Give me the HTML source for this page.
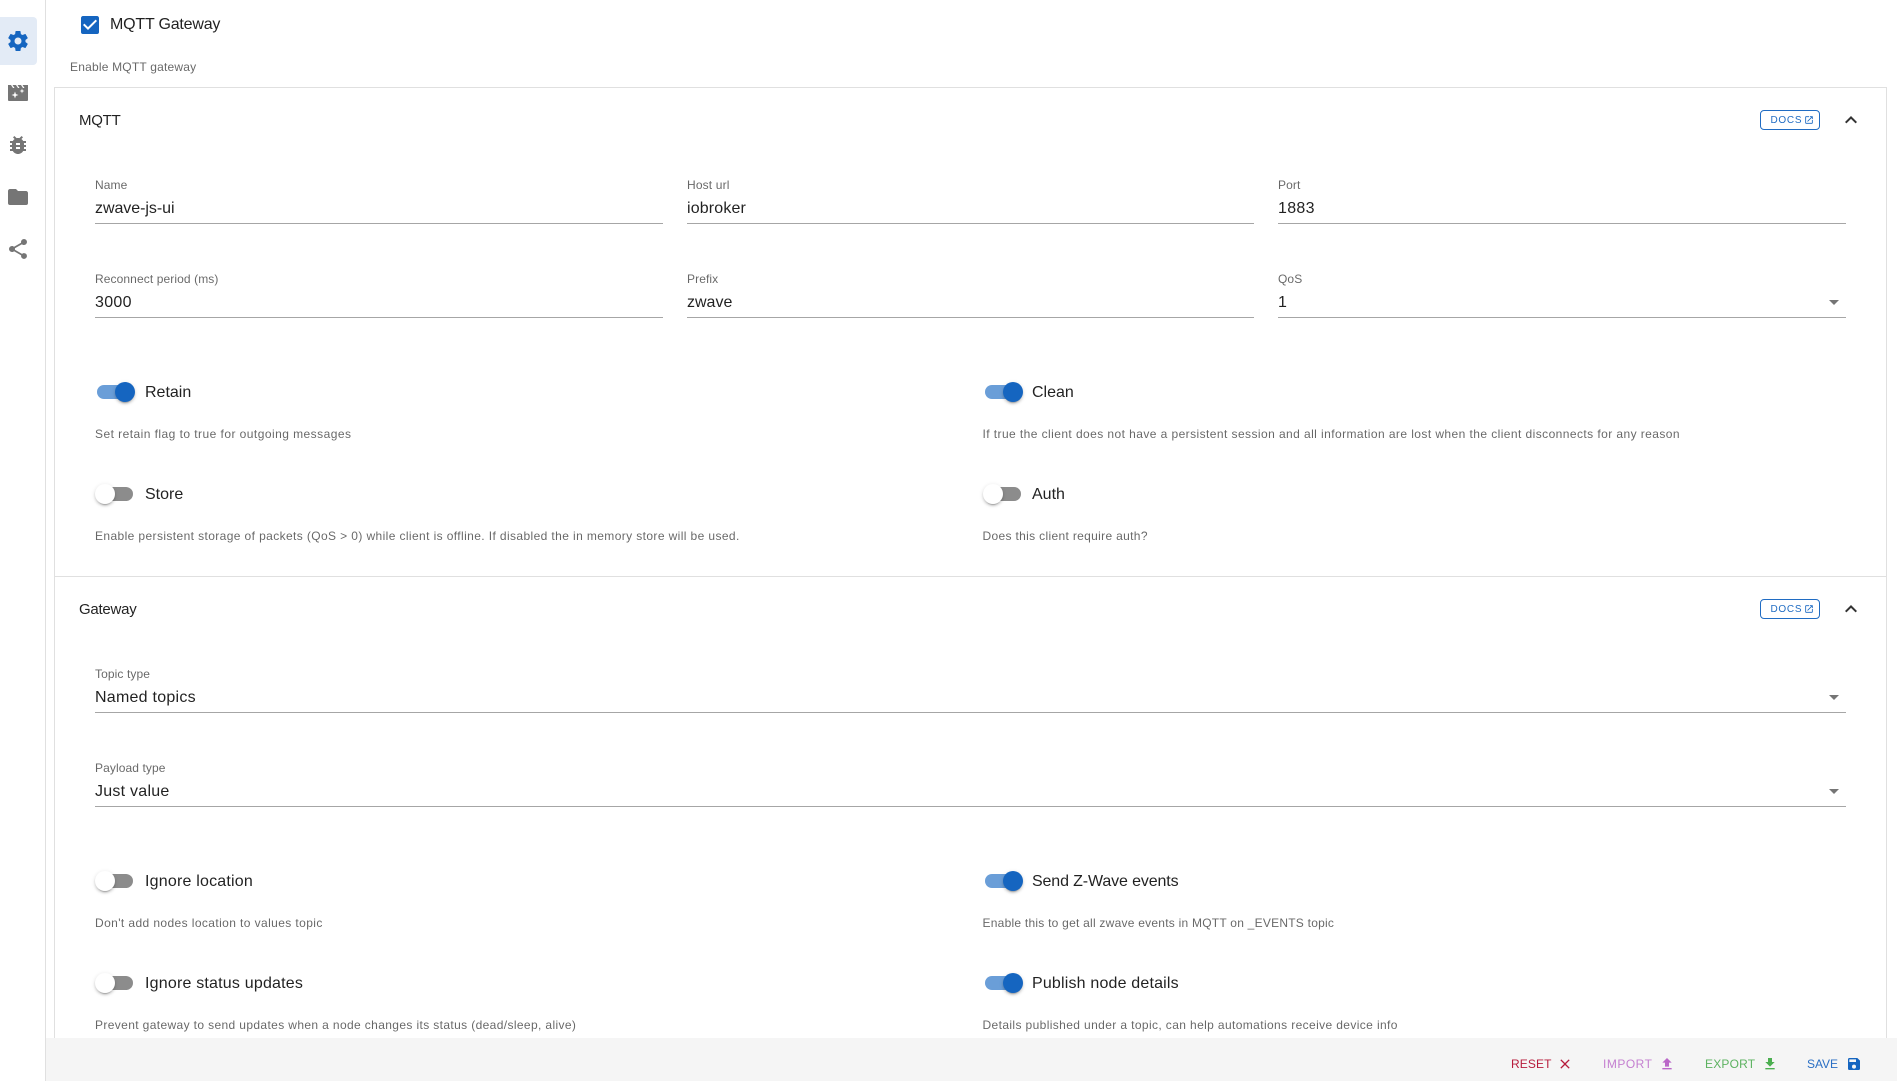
<!DOCTYPE html>
<html><head><meta charset="utf-8"><title>Settings</title>
<style>
html,body{margin:0;padding:0;width:1897px;height:1081px;overflow:hidden;background:#fff}
body{font-family:"Liberation Sans",sans-serif;color:rgba(0,0,0,.87);position:relative}
.a{position:absolute}
.t{position:absolute;white-space:nowrap;line-height:20px;font-size:16px}
.h{font-size:12px;color:rgba(0,0,0,.6);letter-spacing:.4px}
.l{font-size:12px;color:rgba(0,0,0,.6);letter-spacing:.1px}
.u{position:absolute;height:1px;background:#a6a6a6}
.track{position:absolute;width:34px;height:14px;border-radius:7px;background:#8c8c8c}
.track.on{background:#6a9ed8}
.thumb{position:absolute;width:20px;height:20px;border-radius:50%;background:#fff;box-shadow:0 3px 1px -2px rgba(0,0,0,.2),0 2px 2px 0 rgba(0,0,0,.14),0 1px 5px 0 rgba(0,0,0,.12)}
.thumb.on{background:#1565c0}
.docs{position:absolute;left:1760px;width:58px;height:18px;border:1px solid #1565c0;border-radius:4px;color:#1565c0;font-size:10px;letter-spacing:.7px;line-height:20px;text-indent:9.5px;background:#fff;opacity:.95}
svg{position:absolute;display:block}
.arrow{position:absolute;width:0;height:0;border-left:5px solid transparent;border-right:5px solid transparent;border-top:5px solid #757575}
.b{position:absolute;white-space:nowrap;font-size:12px;line-height:20px;top:1054px}
</style></head><body>

<!-- sidebar -->
<div class="a" style="left:45px;top:0;width:1px;height:1081px;background:#e0e0e0"></div>
<div class="a" style="left:0;top:17px;width:37px;height:48px;background:#e3ebf6;border-radius:0 4px 4px 0"></div>
<svg style="left:6px;top:29px" width="24" height="24" viewBox="0 0 24 24" fill="#1565c0"><path d="M12,15.5A3.5,3.5 0 0,1 8.5,12A3.5,3.5 0 0,1 12,8.5A3.5,3.5 0 0,1 15.5,12A3.5,3.5 0 0,1 12,15.5M19.43,12.97C19.47,12.65 19.5,12.33 19.5,12C19.5,11.67 19.47,11.34 19.43,11L21.54,9.37C21.73,9.22 21.78,8.95 21.66,8.73L19.66,5.27C19.54,5.05 19.27,4.96 19.05,5.05L16.56,6.05C16.04,5.66 15.5,5.32 14.87,5.07L14.5,2.42C14.46,2.18 14.25,2 14,2H10C9.75,2 9.54,2.18 9.5,2.42L9.13,5.07C8.5,5.32 7.96,5.66 7.44,6.05L4.95,5.05C4.73,4.96 4.46,5.05 4.34,5.27L2.34,8.73C2.21,8.95 2.27,9.22 2.46,9.37L4.57,11C4.53,11.34 4.5,11.67 4.5,12C4.5,12.33 4.53,12.65 4.57,12.97L2.46,14.63C2.27,14.78 2.21,15.05 2.34,15.27L4.34,18.73C4.46,18.95 4.73,19.03 4.95,18.95L7.44,17.94C7.96,18.34 8.5,18.68 9.13,18.93L9.5,21.58C9.54,21.82 9.75,22 10,22H14C14.25,22 14.46,21.82 14.5,21.58L14.87,18.93C15.5,18.67 16.04,18.34 16.56,17.94L19.05,18.95C19.27,19.03 19.54,18.95 19.66,18.73L21.66,15.27C21.78,15.05 21.73,14.78 21.54,14.63L19.43,12.97Z"/></svg>
<svg style="left:6px;top:81px" width="24" height="24" viewBox="0 0 24 24"><path fill="#757575" d="M2,4H5L7,7H8.5L6.5,4H10L12,7H13.5L11.5,4H15L17,7H18.5L16.5,4H22V19A1,1 0 0,1 21,20H3A1,1 0 0,1 2,19Z"/><path fill="#fff" d="M9,10.5L9.9,13.1L12.5,14L9.9,14.9L9,17.5L8.1,14.9L5.5,14L8.1,13.1ZM16,7.5L16.6,9.4L18.5,10L16.6,10.6L16,12.5L15.4,10.6L13.5,10L15.4,9.4Z"/></svg>
<svg style="left:6px;top:133px" width="24" height="24" viewBox="0 0 24 24" fill="#757575"><path d="M14,12H10V10H14M14,16H10V14H14M20,8H17.19C16.74,7.22 16.12,6.55 15.37,6.04L17,4.41L15.59,3L13.42,5.17C12.96,5.06 12.5,5 12,5C11.5,5 11.04,5.06 10.59,5.17L8.41,3L7,4.41L8.62,6.04C7.88,6.55 7.26,7.22 6.81,8H4V10H6.09C6.04,10.33 6,10.66 6,11V12H4V14H6V15C6,15.34 6.04,15.67 6.09,16H4V18H6.81C7.85,19.79 9.78,21 12,21C14.22,21 16.15,19.79 17.19,18H20V16H17.91C17.96,15.67 18,15.34 18,15V14H20V12H18V11C18,10.66 17.96,10.33 17.91,10H20V8Z"/></svg>
<svg style="left:6px;top:185px" width="24" height="24" viewBox="0 0 24 24" fill="#757575"><path d="M10,4H4C2.89,4 2,4.89 2,6V18A2,2 0 0,0 4,20H20A2,2 0 0,0 22,18V8C22,6.89 21.1,6 20,6H12L10,4Z"/></svg>
<svg style="left:6px;top:237px" width="24" height="24" viewBox="0 0 24 24" fill="#757575"><path d="M18,16.08C17.24,16.08 16.56,16.38 16.04,16.85L8.91,12.7C8.96,12.47 9,12.24 9,12C9,11.76 8.96,11.53 8.91,11.3L15.96,7.19C16.5,7.69 17.21,8 18,8A3,3 0 0,0 21,5A3,3 0 0,0 18,2A3,3 0 0,0 15,5C15,5.24 15.04,5.47 15.09,5.7L8.04,9.81C7.5,9.31 6.79,9 6,9A3,3 0 0,0 3,12A3,3 0 0,0 6,15C6.79,15 7.5,14.69 8.04,14.19L15.16,18.34C15.11,18.55 15.08,18.77 15.08,19C15.08,20.61 16.39,21.91 18,21.91C19.61,21.91 20.92,20.61 20.92,19A2.92,2.92 0 0,0 18,16.08Z"/></svg>

<!-- gateway checkbox -->
<svg style="left:78px;top:13px" width="24" height="24" viewBox="0 0 24 24" fill="#1565c0"><path d="M10,17L5,12L6.41,10.59L10,14.17L17.59,6.58L19,8M19,3H5C3.89,3 3,3.89 3,5V19A2,2 0 0,0 5,21H19A2,2 0 0,0 21,19V5C21,3.89 20.1,3 19,3Z"/></svg>
<div class="t" style="left:110px;top:15px;letter-spacing:-.2px">MQTT Gateway</div>
<div class="t h" style="left:70px;top:57px;letter-spacing:.2px">Enable MQTT gateway</div>

<!-- panel -->
<div class="a" style="left:54px;top:87px;width:1831px;height:1000px;border:1px solid #e0e0e0"></div>
<div class="a" style="left:55px;top:576px;width:1831px;height:1px;background:#e0e0e0"></div>

<!-- MQTT -->
<div class="t" style="left:79px;top:111px;font-size:15px;letter-spacing:-.25px">MQTT</div>
<div class="docs" style="top:110px">DOCS</div>
<svg style="left:1804px;top:115px" width="10" height="10" viewBox="0 0 24 24" fill="#1565c0"><path d="M14,3V5H17.59L7.76,14.83L9.17,16.24L19,6.41V10H21V3M19,19H5V5H12V3H5C3.89,3 3,3.9 3,5V19A2,2 0 0,0 5,21H19A2,2 0 0,0 21,19V12H19V19Z"/></svg>
<svg style="left:1839px;top:108px" width="24" height="24" viewBox="0 0 24 24" fill="#333"><path d="M7.41,15.41L12,10.83L16.59,15.41L18,14L12,8L6,14L7.41,15.41Z"/></svg>

<div class="t l" style="left:95px;top:175px">Name</div>
<div class="t" style="left:95px;top:199px;letter-spacing:-.05px">zwave-js-ui</div>
<div class="u" style="left:95px;top:223px;width:568px"></div>
<div class="t l" style="left:687px;top:175px;letter-spacing:.15px">Host url</div>
<div class="t" style="left:687px;top:199px;letter-spacing:.15px">iobroker</div>
<div class="u" style="left:687px;top:223px;width:567px"></div>
<div class="t l" style="left:1278px;top:175px">Port</div>
<div class="t" style="left:1278px;top:199px;letter-spacing:.3px">1883</div>
<div class="u" style="left:1278px;top:223px;width:568px"></div>

<div class="t l" style="left:95px;top:269px">Reconnect period (ms)</div>
<div class="t" style="left:95px;top:293px;letter-spacing:.3px">3000</div>
<div class="u" style="left:95px;top:317px;width:568px"></div>
<div class="t l" style="left:687px;top:269px">Prefix</div>
<div class="t" style="left:687px;top:293px">zwave</div>
<div class="u" style="left:687px;top:317px;width:567px"></div>
<div class="t l" style="left:1278px;top:269px">QoS</div>
<div class="t" style="left:1278px;top:293px">1</div>
<div class="u" style="left:1278px;top:317px;width:568px"></div>
<div class="arrow" style="left:1829px;top:300px"></div>

<!-- toggles -->
<div class="track on" style="left:97px;top:385px"></div><div class="thumb on" style="left:115px;top:382px"></div>
<div class="t" style="left:145px;top:383px">Retain</div>
<div class="t h" style="left:95px;top:424px;letter-spacing:.45px">Set retain flag to true for outgoing messages</div>
<div class="track on" style="left:985px;top:385px"></div><div class="thumb on" style="left:1003px;top:382px"></div>
<div class="t" style="left:1032px;top:383px">Clean</div>
<div class="t h" style="left:982.5px;top:424px;letter-spacing:.425px">If true the client does not have a persistent session and all information are lost when the client disconnects for any reason</div>
<div class="track" style="left:99px;top:487px"></div><div class="thumb" style="left:95px;top:484px"></div>
<div class="t" style="left:145px;top:485px">Store</div>
<div class="t h" style="left:95px;top:526px;letter-spacing:.39px">Enable persistent storage of packets (QoS &gt; 0) while client is offline. If disabled the in memory store will be used.</div>
<div class="track" style="left:987px;top:487px"></div><div class="thumb" style="left:983px;top:484px"></div>
<div class="t" style="left:1032px;top:485px">Auth</div>
<div class="t h" style="left:982.5px;top:526px;letter-spacing:.33px">Does this client require auth?</div>

<!-- Gateway -->
<div class="t" style="left:79px;top:600px;font-size:15px;letter-spacing:-.25px">Gateway</div>
<div class="docs" style="top:599px">DOCS</div>
<svg style="left:1804px;top:604px" width="10" height="10" viewBox="0 0 24 24" fill="#1565c0"><path d="M14,3V5H17.59L7.76,14.83L9.17,16.24L19,6.41V10H21V3M19,19H5V5H12V3H5C3.89,3 3,3.9 3,5V19A2,2 0 0,0 5,21H19A2,2 0 0,0 21,19V12H19V19Z"/></svg>
<svg style="left:1839px;top:597px" width="24" height="24" viewBox="0 0 24 24" fill="#333"><path d="M7.41,15.41L12,10.83L16.59,15.41L18,14L12,8L6,14L7.41,15.41Z"/></svg>

<div class="t l" style="left:95px;top:664px">Topic type</div>
<div class="t" style="left:95px;top:688px;letter-spacing:.25px">Named topics</div>
<div class="u" style="left:95px;top:712px;width:1751px"></div>
<div class="arrow" style="left:1829px;top:695px"></div>
<div class="t l" style="left:95px;top:758px">Payload type</div>
<div class="t" style="left:95px;top:782px;letter-spacing:.25px">Just value</div>
<div class="u" style="left:95px;top:806px;width:1751px"></div>
<div class="arrow" style="left:1829px;top:789px"></div>

<div class="track" style="left:99px;top:874px"></div><div class="thumb" style="left:95px;top:871px"></div>
<div class="t" style="left:145px;top:872px;letter-spacing:.2px">Ignore location</div>
<div class="t h" style="left:95px;top:913px">Don't add nodes location to values topic</div>
<div class="track on" style="left:985px;top:874px"></div><div class="thumb on" style="left:1003px;top:871px"></div>
<div class="t" style="left:1032px;top:872px;letter-spacing:-.13px">Send Z-Wave events</div>
<div class="t h" style="left:982.5px;top:913px;letter-spacing:.24px">Enable this to get all zwave events in MQTT on _EVENTS topic</div>
<div class="track" style="left:99px;top:976px"></div><div class="thumb" style="left:95px;top:973px"></div>
<div class="t" style="left:145px;top:974px;letter-spacing:.2px">Ignore status updates</div>
<div class="t h" style="left:95px;top:1015px;letter-spacing:.37px">Prevent gateway to send updates when a node changes its status (dead/sleep, alive)</div>
<div class="track on" style="left:985px;top:976px"></div><div class="thumb on" style="left:1003px;top:973px"></div>
<div class="t" style="left:1032px;top:974px;letter-spacing:.18px">Publish node details</div>
<div class="t h" style="left:982.5px;top:1015px;letter-spacing:.38px">Details published under a topic, can help automations receive device info</div>

<!-- footer -->
<div class="a" style="left:46px;top:1038px;width:1851px;height:43px;background:#f5f5f5"></div>
<div class="b" style="left:1511px;color:#b71c3c;letter-spacing:.1px">RESET</div>
<svg style="left:1557px;top:1056px" width="16" height="16" viewBox="0 0 24 24" fill="#b71c3c"><path d="M19,6.41L17.59,5L12,10.59L6.41,5L5,6.41L10.59,12L5,17.59L6.41,19L12,13.41L17.59,19L19,17.59L13.41,12L19,6.41Z"/></svg>
<div class="b" style="left:1603px;color:#c47fd0;letter-spacing:.5px">IMPORT</div>
<svg style="left:1659px;top:1056px" width="16" height="16" viewBox="0 0 24 24" fill="#ba68c8"><path d="M9,16V10H5L12,3L19,10H15V16H9M5,20V18H19V20H5Z"/></svg>
<div class="b" style="left:1705px;color:#5cb260;letter-spacing:.2px">EXPORT</div>
<svg style="left:1762px;top:1056px" width="16" height="16" viewBox="0 0 24 24" fill="#4caf50"><path d="M5,20H19V18H5M19,9H15V3H9V9H5L12,16L19,9Z"/></svg>
<div class="b" style="left:1807px;color:#2a6fc4;letter-spacing:-.05px">SAVE</div>
<svg style="left:1846px;top:1056px" width="16" height="16" viewBox="0 0 24 24" fill="#1565c0"><path d="M15,9H5V5H15M12,19A3,3 0 0,1 9,16A3,3 0 0,1 12,13A3,3 0 0,1 15,16A3,3 0 0,1 12,19M17,3H5C3.89,3 3,3.9 3,5V19A2,2 0 0,0 5,21H19A2,2 0 0,0 21,19V7L17,3Z"/></svg>
</body></html>
